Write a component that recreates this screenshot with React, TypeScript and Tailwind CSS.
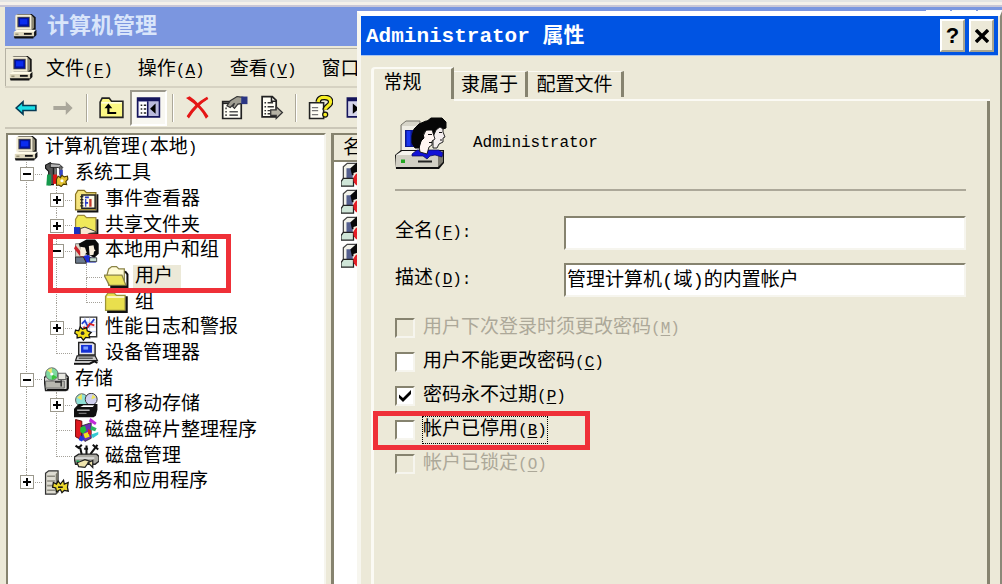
import type { ReactNode } from "react"

type IconProps = { children: ReactNode; className?: string }

function Icon({ children, className = "size-[25px]" }: IconProps) {
  return (
    <svg viewBox="0 0 16 16" className={`shrink-0 ${className}`} aria-hidden="true">
      {children}
    </svg>
  )
}

const ComputerIcon = () => (
  <Icon>
    <path d="M2 1l1-1h9l2.500 2v8L13 11H3z" fill="#111" />
    <path d="M1.500 1l1-.7H11l1 .7v9H1.500z" fill="#f3edd6" />
    <path d="M12 1l1.500 1.500v6.500L12 10z" fill="#8d8872" />
    <path d="M2.800 1.800h7.900v6.700H2.800z" fill="#4c4a44" />
    <path d="M3.500 2.400h6.700v5.600H3.500z" fill="#0012a0" />
    <path d="M4.500 3.300h4.700v3.400H4.500z" fill="#0a2cf0" />
    <path d="M.5 11.500L2.500 10h12l-1 1.500z" fill="#fffbe8" />
    <path d="M.5 11.500h13v3H.5z" fill="#ded7bd" />
    <path d="M13.500 11.500l1.500-1.500v3.500l-1.500 1.500z" fill="#111" />
    <path d="M.5 14.300h13l-.5 1.400H1z" fill="#111" />
    <path d="M7 12.700h5" stroke="#111" strokeWidth="1.200" />
    <path d="M1.500 13h2" stroke="#999377" />
  </Icon>
)

const ToolsIcon = () => (
  <Icon>
    <path d="M1 2l3-1.500 2 2v12H3V6L1 4z" fill="#555" stroke="#111" strokeWidth=".7" />
    <path d="M2 8h2.500v7H1.500z" fill="#159a4c" />
    <path d="M4 1l6 .5 2 2-1 1-2-1H4z" fill="#b8b8b8" stroke="#222" strokeWidth=".6" />
    <path d="M6.500 4h1.500v5H6.500zM10 3h1.500v5H10z" fill="#777" stroke="#222" strokeWidth=".4" />
    <path d="M5.800 8h2.500v6H5.800z" fill="#e01414" />
    <path d="M10 5h2v5h-2z" fill="#3446c8" />
    <path d="M8 11l1-2 1.500 1 1-1.500 1.500 1 2-.5.300 2-1.300 1.500.5 2-2-.3-1.500 1.500-1.500-1-1.500.3z" fill="#e3c331" stroke="#4c3b00" strokeWidth=".7" />
    <circle cx="11.500" cy="12" r="1" fill="#fff" />
  </Icon>
)

const EventIcon = () => (
  <Icon>
    <path d="M1 4l1.500-2.500h4L8 3h6v11H1z" fill="#f5e47e" stroke="#8a7422" strokeWidth=".8" />
    <path d="M15 4v11H2" fill="none" stroke="#111" strokeWidth="1.200" />
    <path d="M5 4.500h8.500v8.500H5z" fill="#fffde9" stroke="#222" strokeWidth=".9" />
    <path d="M4 5.500h2M4 7.500h2M4 9.500h2M4 11.500h2" stroke="#222" strokeWidth=".8" />
    <path d="M7 6h2.500M7 9.500h2" stroke="#2638c8" />
    <path d="M7.500 7v5" stroke="#2638c8" strokeWidth=".8" />
    <path d="M10.500 7v5" stroke="#c43b2d" strokeWidth="1.500" />
  </Icon>
)

const SharedIcon = () => (
  <Icon>
    <path d="M1 4l1.500-2.500h4L8 3h6v10H1z" fill="#f0e95a" stroke="#9c8a3c" strokeWidth=".8" />
    <path d="M15 4v9.500H8" fill="none" stroke="#111" strokeWidth="1.200" />
    <path d="M0 9h4v6H0z" fill="#1a32c0" />
    <path d="M4 10l3-1 6 2.500 1.500 1L10 13l-3 1.500H4z" fill="#f8ead4" stroke="#333" strokeWidth=".6" />
    <path d="M1 15.300h11" stroke="#111" strokeWidth=".9" />
  </Icon>
)

const UsersIcon = () => (
  <Icon>
    <path d="M1 3h6v9H1z" fill="#d9d6c8" stroke="#777" strokeWidth=".6" />
    <path d="M1 4l8 10-2 1L0 6z" fill="#c9252c" />
    <path d="M3 3L8 .3h5.500L15.800 3v6.500L13 12l-2-1-6-2z" fill="#0a0a0a" />
    <path d="M9.500 4.500L12.500 4l.5 2.500.8 1-1 .5-.3 2-2.500.5z" fill="#f8eedd" />
    <path d="M4 5l3 .5 1 3-1.500 2.500H4z" fill="#f8eedd" />
    <path d="M6 11l3-1 2 2h3v3H8z" fill="#1a2bd6" />
    <path d="M1 11.500h5l2 4H1z" fill="#6c7a8c" stroke="#222" strokeWidth=".6" />
    <path d="M10 12h4.500v2.500H10z" fill="#c4ddd0" stroke="#222" strokeWidth=".5" />
  </Icon>
)

const OpenFolderIcon = () => (
  <Icon>
    <path d="M2 6l1-3.500L5 1h3l1.500 1.500H13V13H3z" fill="#fffbd6" stroke="#8a8346" strokeWidth=".8" />
    <path d="M0 6.500h11.500L14 13H3.500z" fill="#ece25c" stroke="#8a8346" strokeWidth=".8" />
    <path d="M13.500 4L15 6v8H4" fill="none" stroke="#111" strokeWidth="1.300" />
  </Icon>
)

const FolderIcon = () => (
  <Icon>
    <path d="M1 4l1.500-2h4L8 3.500h5.500V13H1z" fill="#e9df4d" stroke="#9d9439" strokeWidth=".8" />
    <path d="M2 4.500h11" stroke="#fffde0" />
    <path d="M14.500 4v10H2" fill="none" stroke="#111" strokeWidth="1.400" />
  </Icon>
)

const PerfIcon = () => (
  <Icon>
    <path d="M4 .7h10.500v12.600H4z" fill="#fff" stroke="#333" strokeWidth=".9" />
    <path d="M5 4h9M5 7h9M5 10h9M7 1v11M10 1v11" stroke="#b9c3ef" strokeWidth=".5" />
    <path d="M5 5l2-2 2 4 4-5" fill="none" stroke="#2040d0" strokeWidth="1.100" />
    <path d="M6 7l2 1 2-3 3 1" fill="none" stroke="#d22" strokeWidth="1.100" />
    <path d="M1 9l2 .5L4 7l1.500 1.500L8 7.500l.5 2 2.500 1-1.500 1.500.5 2-2.500-.3L6 15.500l-1.500-2L2 14v-2L.5 11z" fill="#f4e018" stroke="#111" strokeWidth=".8" />
    <circle cx="5.500" cy="11" r="1.200" fill="#333" />
  </Icon>
)

const DeviceIcon = () => (
  <Icon>
    <path d="M3 1h9l1.500 1v7H3z" fill="#e4e4ee" stroke="#222" strokeWidth=".9" />
    <path d="M4.500 2.500h7v5h-7z" fill="#1430d4" />
    <path d="M6 3.500h3v2H6z" fill="#7fa0ff" />
    <path d="M2 9.500h11.500l1.500 3H1z" fill="#c9c9c9" stroke="#222" strokeWidth=".8" />
    <path d="M3 11h9" stroke="#444" strokeWidth=".8" />
    <path d="M0 14.500h10l3-1.500 2 1" fill="none" stroke="#111" strokeWidth="1.300" />
  </Icon>
)

const StorageIcon = () => (
  <Icon>
    <path d="M0 7l2-2h12l1.500 1.500v7L14 15H1z" fill="#d5d5d0" stroke="#222" strokeWidth=".9" />
    <circle cx="5" cy="4.500" r="4" fill="#7ed9a0" stroke="#666" strokeWidth=".6" />
    <path d="M5 4.500L2 2l3-1.300z" fill="#f3e867" />
    <path d="M5 4.500l3.500 2L5 8.300z" fill="#3bc43b" />
    <circle cx="5" cy="4.500" r="1" fill="#fff" />
    <path d="M1 9h12v4.500H1z" fill="#b8b8b0" stroke="#555" strokeWidth=".5" />
    <path d="M9 4h5v4H9z" fill="#e8e8e2" stroke="#555" strokeWidth=".6" />
    <path d="M11 8.500v4M7 9.500h4" stroke="#333" />
    <path d="M15 7v7.500H2" fill="none" stroke="#111" />
  </Icon>
)

const RemovableIcon = () => (
  <Icon>
    <circle cx="5" cy="4.500" r="4" fill="#8fe0d6" stroke="#555" strokeWidth=".6" />
    <circle cx="11" cy="4" r="3.800" fill="#cfd0ee" stroke="#333" strokeWidth=".6" />
    <path d="M5 4.500L2 3l3-2.500zM11 4l3-1-2-2z" fill="#f0e657" />
    <path d="M0 10l3-3h12v3.500l-1 4L12.500 15.500H0z" fill="#101010" />
    <path d="M4 9h8l1-1.200H6z" fill="#fff" />
    <path d="M2 11h8" stroke="#ddd" strokeWidth=".8" />
    <path d="M3 13h5" stroke="#888" strokeWidth=".7" />
  </Icon>
)

const DefragIcon = () => (
  <Icon>
    <path d="M1 1l4 1v12L1 12z" fill="#e0191f" stroke="#600" strokeWidth=".6" />
    <path d="M5 5l6-2v10l-4 2-2-2z" fill="#6c2fb5" stroke="#222" strokeWidth=".5" />
    <path d="M4 6l3-1 1 3-2 2-2-1z" fill="#1fbf3a" />
    <path d="M6 10l3-1 1 3-3 1z" fill="#f0e41e" />
    <path d="M4 11l3 2-2 2-2-1z" fill="#2238dc" />
    <path d="M10.500 0l4 3-1 1.500-4-2.500z" fill="#c22ad8" />
    <path d="M11 5l3.500 1.500-1 2-3-1z" fill="#2cb65e" />
    <path d="M11 10.500l4.500-1.500v1.500L12 13z" fill="#35c9d3" />
    <path d="M9 7l2 1v3L9 10z" fill="#e0191f" />
  </Icon>
)

const DiskIcon = () => (
  <Icon>
    <path d="M1 1l2 1.500 2-2M4 2.500L5 7M8 1v6M6.500 3H9M15 .5l-4.500 6M12 .5l3.500 3" fill="none" stroke="#111" strokeWidth="1.300" />
    <path d="M0 8.500l3-2h11.500L16 8v3l-2.500 2H1z" fill="#aaa9a2" stroke="#222" strokeWidth=".9" />
    <path d="M1 9h12" stroke="#eee" strokeWidth=".8" />
    <path d="M2 12l5-2 3 1-3 4-4-.5zM9 12l3-1.500V15z" fill="#efe4ad" stroke="#222" strokeWidth=".8" />
    <path d="M1.500 11h2" stroke="#16a050" />
  </Icon>
)

const ServicesIcon = () => (
  <Icon>
    <path d="M1 2l2-1.500h6V14l-1.500 1.500H1z" fill="#dedcd2" stroke="#333" strokeWidth=".8" />
    <path d="M7.500 2.500L9 1v13l-1.500 1.500z" fill="#77756a" />
    <path d="M2 4h5M2 7h5M2 10h5M2 13h5" stroke="#8d8b80" />
    <path d="M6 8l2 1 1-2 1.500 2 2-2.500.5 2.500 2.500-1-.5 3 .5 2.500-2.500-.5-1.500 1.500-1-2L8 14l-.5-2.500L5.500 11z" fill="#ecd92e" stroke="#111" strokeWidth=".8" />
    <path d="M9 11h3" stroke="#111" />
  </Icon>
)

const AccountIcon = () => (
  <Icon>
    <path d="M1.500 3L4 .8h7V13H1.500z" fill="#f2f2ea" stroke="#444" strokeWidth=".8" />
    <path d="M3.500 4h4v6.500h-4z" fill="#55608f" />
    <path d="M6 4l4-3.500h6v8H7z" fill="#080808" />
    <path d="M8 7l3-1 .5 4L8 11z" fill="#f5eadc" />
    <path d="M0 12.500l1.500-2H8v5H0z" fill="#cfe6d8" stroke="#222" strokeWidth=".8" />
    <circle cx="12.500" cy="11.200" r="4.600" fill="#e51c24" />
    <path d="M10.500 9.200l4 4M14.500 9.200l-4 4" stroke="#fff" strokeWidth="1.300" />
  </Icon>
)

const AdministratorIcon = () => (
  <svg viewBox="0 0 52 54" className="h-[54px] w-[52px] shrink-0" aria-hidden="true">
    <path d="M6 8l5-4h14v31H6z" fill="#d7d5c9" stroke="#77756b" />
    <path d="M7 9h19v25H7z" fill="#efede4" />
    <path d="M10 13h12v17H10z" fill="#0b1790" />
    <path d="M11.500 14h4v15h-4z" fill="#1b37ee" />
    <path d="M0 38l6-5h43v13l-5 6H1z" fill="#111" />
    <path d="M1 38l6-4h41l-5 4z" fill="#f5f4ee" />
    <path d="M1 38h42v12H1z" fill="#d2d0c5" />
    <path d="M43 38l5-4v11l-5 5z" fill="#7c7a70" />
    <path d="M6 42.500h4v3.500H6z" fill="#22a722" />
    <path d="M23 44.500h14" stroke="#222" strokeWidth="2" />
    <path d="M17 37l5-4h22l4 3-1 4-7-2-5 1-3 3-4-3H17z" fill="#1212d8" stroke="#0a0a50" strokeWidth=".7" />
    <path d="M31 5l5-4h11l4 4v6l-3 1-3-2-4 3v7l-4 2z" fill="#060606" stroke="#060606" strokeLinejoin="round" />
    <path d="M41 13l4-3 3 2v3l2 5-2 1v4l-4 2-2 4h-4l0-11z" fill="#f4eeee" stroke="#111" strokeWidth=".9" />
    <path d="M31 13l6-1 1 4 2 6-3 2v4l-3 2-2 7-7-2-1-6 2-5z" fill="#fff5f2" stroke="#111" strokeWidth=".9" />
    <path d="M17 19l2-7 5-5 7-3h8l4 3-1 4-5 2h-6l-3 4 1 4-3 3-2 7h-4l-3-5z" fill="#060606" stroke="#060606" strokeLinejoin="round" />
    <path d="M33 17.500h4M44 15.500h3M34 25.500h3M45 23h2" stroke="#111" />
  </svg>
)

type Node = { text: string; latin?: string; icon: ReactNode; cells: string[]; selected?: boolean }

// one cell per level: "|" passes through, "T" branches, "L" ends; + and - add an expander
const tree: Node[] = [
  { text: "计算机管理", latin: "本地", icon: <ComputerIcon />, cells: [] },
  { text: "系统工具", icon: <ToolsIcon />, cells: ["T-"] },
  { text: "事件查看器", icon: <EventIcon />, cells: ["|", "T+"] },
  { text: "共享文件夹", icon: <SharedIcon />, cells: ["|", "T+"] },
  { text: "本地用户和组", icon: <UsersIcon />, cells: ["|", "T-"] },
  { text: "用户", icon: <OpenFolderIcon />, cells: ["|", "|", "T"], selected: true },
  { text: "组", icon: <FolderIcon />, cells: ["|", "|", "L"] },
  { text: "性能日志和警报", icon: <PerfIcon />, cells: ["|", "T+"] },
  { text: "设备管理器", icon: <DeviceIcon />, cells: ["|", "L"] },
  { text: "存储", icon: <StorageIcon />, cells: ["T-"] },
  { text: "可移动存储", icon: <RemovableIcon />, cells: ["|", "T+"] },
  { text: "磁盘碎片整理程序", icon: <DefragIcon />, cells: ["|", "T"] },
  { text: "磁盘管理", icon: <DiskIcon />, cells: ["|", "L"] },
  { text: "服务和应用程序", icon: <ServicesIcon />, cells: ["L+"] },
]

function Cell({ kind }: { kind: string }) {
  const branch = kind[0] !== "|"
  return (
    <span className="relative flex w-[30px] shrink-0 justify-end self-stretch">
      <span className="flex w-4 flex-col">
        <span className={`flex-1 border-l border-dotted border-[#a5a29a] ${branch ? "border-b" : ""}`} />
        <span className={`flex-1 border-dotted border-[#a5a29a] ${kind[0] === "L" ? "" : "border-l"}`} />
      </span>
      {kind[1] && (
        <button
          type="button"
          aria-label={kind[1] === "+" ? "展开" : "折叠"}
          className="absolute inset-0 m-auto flex size-[14px] items-center justify-center border border-[#9b988c] bg-white"
        >
          <svg viewBox="0 0 8 8" className="size-2" aria-hidden="true">
            <path d={kind[1] === "+" ? "M0 4h8M4 0v8" : "M0 4h8"} stroke="#000" strokeWidth="2" />
          </svg>
        </button>
      )}
    </span>
  )
}

function Caption({ text, accel, colon }: { text: string; accel: string; colon?: boolean }) {
  return (
    <>
      {text}
      <span className="text-base">
        (<span className="underline underline-offset-2">{accel}</span>){colon && ":"}
      </span>
    </>
  )
}

function ToolButton({ label, pressed, children }: { label: string; pressed?: boolean; children: ReactNode }) {
  return (
    <button
      type="button"
      aria-label={label}
      className={`flex h-9 w-[37px] shrink-0 items-center justify-center ${
        pressed ? "border-2 border-t-[#9b988c] border-r-white border-b-white border-l-[#9b988c] bg-[#f8f7f1]" : ""
      }`}
    >
      {children}
    </button>
  )
}

const Separator = () => (
  <span className="flex h-7 w-3 shrink-0 justify-center">
    <span className="w-[2px] border-r border-l border-r-white border-l-[#aca899]" />
  </span>
)

function Toolbar() {
  return (
    <div className="flex h-[43px] items-center overflow-hidden border-t-2 border-b-2 border-t-[#d6d2c2] border-b-[#cbc7b8] pl-[2px]">
      <ToolButton label="后退">
        <Icon className="size-[22px]">
          <path d="M.8 8l5-4.500v2.700h9.400v3.600H5.800v2.700z" fill="#18e0e8" stroke="#063a55" strokeWidth="1.200" />
        </Icon>
      </ToolButton>
      <ToolButton label="前进">
        <Icon className="size-[22px]">
          <path d="M15 8l-5-5v3.500H1v3h9V13z" fill="#aaa79b" />
        </Icon>
      </ToolButton>
      <Separator />
      <ToolButton label="上一级">
        <Icon>
          <path d="M.7 4.500L2 2h4.500L8 4h7.300v10.300H.7z" fill="#fbf784" stroke="#222" />
          <path d="M1.500 5h13" stroke="#fffde0" />
          <path d="M6 7v4.500h5" fill="none" stroke="#000" strokeWidth="1.400" />
          <path d="M3.500 8.500L6 5.500l2.500 3z" />
        </Icon>
      </ToolButton>
      <ToolButton label="显示/隐藏控制台树" pressed>
        <Icon>
          <path d="M1 2h14v12H1z" fill="#b9b9dc" stroke="#15155c" />
          <path d="M1 2h14v2H1z" fill="#15155c" />
          <path d="M2 4.500h5V13H2z" fill="#fff" />
          <path d="M3 6.500h1M5 6.500h1.500M3 9h1M5 9h1.500M3 11.500h1M5 11.500h1.500" stroke="#222" />
          <path d="M7.500 4v10" stroke="#15155c" />
          <path d="M12.500 5.500v6.500L9 8.800z" />
        </Icon>
      </ToolButton>
      <Separator />
      <ToolButton label="删除">
        <Icon className="size-[23px]">
          <path d="M1 1.500C5 4 11 9 14 15l1-1C12 9 6 3 2.500 .8z" fill="#e51616" stroke="#e51616" />
          <path d="M14.500 1C9 4 4 9 1 14l1 1C5 10 10 5 15 2z" fill="#e51616" stroke="#e51616" strokeWidth=".8" />
        </Icon>
      </ToolButton>
      <ToolButton label="属性">
        <Icon className="size-[27px]">
          <path d="M1 4.500h11v10H1z" fill="#fffef5" stroke="#222" />
          <path d="M1 5.500h11" stroke="#222" />
          <path d="M2.500 8.500h1M2.500 10.500h1M2.500 12.500h1M5 10.500h5M5 12.500h5" stroke="#555" />
          <path d="M3.500 7l2-3 4-2.500L13 2v3.500L10 6 8 8.500 7 7.500l1-2L5.500 8z" fill="#a09e92" stroke="#333" strokeWidth=".7" />
          <path d="M12 1.500h3.700V6H12z" fill="#2b3684" />
        </Icon>
      </ToolButton>
      <ToolButton label="导出列表">
        <Icon>
          <path d="M2 1h6.500L11 3.500V14H2z" fill="#fffef5" stroke="#222" strokeWidth="1.100" />
          <path d="M8 1v3h3" fill="none" stroke="#222" />
          <path d="M3.500 5h1M3.500 7.500h1M3.500 10h1M3.500 12h1M5.500 5H9M5.500 7.500h4M5.500 10h2M5.500 12h2" stroke="#333" strokeWidth=".9" />
          <path d="M7.500 9.500H11v-2l4 3.700-4 3.800v-2H7.500z" fill="#b5b2a4" stroke="#333" strokeWidth=".8" />
        </Icon>
      </ToolButton>
      <Separator />
      <ToolButton label="帮助">
        <Icon>
          <path d="M1 5h9v10H1z" fill="#fffef5" stroke="#222" />
          <path d="M2.500 8h4M2.500 10h4M2.500 12.500h4" stroke="#777" strokeWidth=".8" />
          <path d="M6.500 4.500C7 1.500 9 1.500 10.500 1.500c3 0 4 1.500 4 3 0 2.500-3.500 2.500-3.500 5" fill="none" stroke="#111" strokeWidth="3.600" />
          <path d="M6.500 4.500C7 1.500 9 1.500 10.500 1.500c3 0 4 1.500 4 3 0 2.500-3.500 2.500-3.500 5" fill="none" stroke="#f7ee22" strokeWidth="2" />
          <circle cx="11" cy="12.500" r="1.600" fill="#f7ee22" stroke="#111" strokeWidth=".8" />
        </Icon>
      </ToolButton>
      <ToolButton label="显示/隐藏操作窗格">
        <Icon>
          <path d="M1.500 2h13v12h-13z" fill="#d5d5ea" stroke="#15155c" />
          <path d="M1.500 2h13v2h-13z" fill="#15155c" />
          <path d="M5 5.500V12l4-3.200z" />
        </Icon>
      </ToolButton>
    </div>
  )
}

function ManagementWindow() {
  return (
    <main className="flex flex-1 flex-col border-l-[5px] border-[#ece9d8] bg-[#ece9d8]">
      <header className="flex h-[39px] items-center justify-between bg-[#7b96e0] pl-2">
        <div className="flex items-center gap-[9px]">
          <ComputerIcon />
          <h1 className="pt-[3px] text-[22px] leading-7 font-bold text-[#d9e5fa]">计算机管理</h1>
        </div>
        <div className="flex gap-[2px]">
          {["最小化", "最大化", "关闭"].map((label) => (
            <button key={label} type="button" aria-label={label} className="h-[34px] w-6 bg-[#fdfcf8]" />
          ))}
        </div>
      </header>
      <nav className="mt-[2px] flex h-[38px] items-center border-t border-l border-[#b5b2a4] pt-[2px] pl-[3px]">
        <ComputerIcon />
        <div className="ml-3 flex gap-[25px] pt-[2px]">
          {[["文件", "F"], ["操作", "A"], ["查看", "V"]].map(([text, accel]) => (
            <button key={accel} type="button" className="whitespace-nowrap">
              <Caption text={text} accel={accel} />
            </button>
          ))}
          <button type="button">窗口</button>
        </div>
      </nav>
      <Toolbar />
      <div className="mt-1 flex flex-1 gap-[5px] pl-px">
        <section className="w-[320px] shrink-0 border-2 border-t-[#86836f] border-r-[#f6f5ee] border-b-0 border-l-[#86836f] bg-white">
          <ul className="grid h-[360px] auto-rows-fr pt-px pl-1">
            {tree.map((node) => (
              <li key={node.text} className="flex min-h-0 items-center">
                {node.cells.map((kind, i) => (
                  <Cell key={i} kind={kind} />
                ))}
                <span className="ml-[2px] flex items-center gap-1">
                  {node.icon}
                  <span className={`px-[2px] leading-6 whitespace-nowrap ${node.selected ? "bg-[#ece9d8] pr-2" : ""}`}>
                    {node.text}
                    {node.latin && (
                      <>
                        <span className="text-base">(</span>
                        {node.latin}
                        <span className="text-base">)</span>
                      </>
                    )}
                  </span>
                </span>
              </li>
            ))}
          </ul>
        </section>
        <section className="flex-1 border-t-2 border-l-[3px] border-[#86836f] bg-white">
          <h2 className="h-[27px] border-b-2 border-[#86836f] bg-[#ece9d8] pl-[9px] leading-7">名</h2>
          <ul className="flex flex-col gap-[2px] pl-[7px]">
            {[0, 1, 2, 3].map((i) => (
              <li key={i}>
                <AccountIcon />
              </li>
            ))}
          </ul>
        </section>
      </div>
    </main>
  )
}

const options = [
  { id: "change", text: "用户下次登录时须更改密码", accel: "M", disabled: true },
  { id: "fixed", text: "用户不能更改密码", accel: "C" },
  { id: "never", text: "密码永不过期", accel: "P", checked: true },
  { id: "off", text: "帐户已停用", accel: "B", focused: true },
  { id: "locked", text: "帐户已锁定", accel: "O", disabled: true },
]

const fields = [
  { id: "fullname", text: "全名", accel: "F", value: "" },
  { id: "description", text: "描述", accel: "D", value: "管理计算机(域)的内置帐户" },
]

function PropertiesDialog() {
  return (
    <div
      role="dialog"
      aria-labelledby="dialog-title"
      className="absolute top-[11px] right-0 bottom-0 left-[357px] flex flex-col border-t-[5px] border-r-2 border-l-4 border-t-white border-r-[#8b8878] border-l-[#f7f6ef] bg-[#ece9d8]"
    >
      <header className="mr-[2px] flex h-10 items-center justify-between border-b border-[#a9c4f0] bg-[#0054e3] pr-1 pl-[5px]">
        <h2 id="dialog-title" className="pt-[3px] text-[21px] leading-7 font-bold text-white">
          Administrator 属性
        </h2>
        <div className="flex gap-1">
          <button
            type="button"
            aria-label="帮助"
            className="h-[33px] w-[25px] border-2 border-t-white border-r-[#a8a48f] border-b-[#a8a48f] border-l-white bg-[#ece9d8] font-['Liberation_Sans',sans-serif] text-[22px] leading-7 font-bold"
          >
            ?
          </button>
          <button
            type="button"
            aria-label="关闭"
            className="flex h-[33px] w-[25px] items-center justify-center border-2 border-t-white border-r-[#a8a48f] border-b-[#a8a48f] border-l-white bg-[#ece9d8]"
          >
            <svg viewBox="0 0 14 14" className="size-[14px]" aria-hidden="true">
              <path d="M1 1l12 12M13 1L1 13" stroke="#000" strokeWidth="3.400" />
            </svg>
          </button>
        </div>
      </header>

      <div role="tablist" className="mt-[11px] ml-[10px] flex items-end">
        <button
          type="button"
          role="tab"
          aria-selected="true"
          className="h-8 w-[83px] rounded-tl-sm border-t-2 border-r-[3px] border-l-[3px] border-t-[#fbfaf4] border-r-[#86836f] border-l-[#fbfaf4] pr-5 pb-px leading-7"
        >
          常规
        </button>
        <button type="button" role="tab" aria-selected="false" className="mb-[2px] h-[26px] w-[74px] border-t border-r-[3px] border-t-[#fbfaf4] border-r-[#86836f] leading-7">
          隶属于
        </button>
        <button type="button" role="tab" aria-selected="false" className="mb-[2px] h-[26px] w-24 border-t border-r-[3px] border-t-[#fbfaf4] border-r-[#86836f] leading-7">
          配置文件
        </button>
      </div>

      <div className="mr-[10px] ml-[10px] flex flex-1">
        <div className="w-[3px] bg-[#fbfaf4]" />
        <div className="flex flex-1 flex-col">
          <div className="ml-20 h-[2px] bg-[#fbfaf4]" />
          <div className="flex-1 border-r-[3px] border-[#86836f] pt-4 pr-[21px] pl-[21px]">
            <div className="flex h-[74px] gap-[26px] border-b-2 border-[#aca899]">
              <AdministratorIcon />
              <p className="mt-[14px] text-base leading-6">Administrator</p>
            </div>
            <div className="mt-[25px] flex flex-col gap-[13px]">
              {fields.map((field) => (
                <div key={field.id} className="flex items-start">
                  <label htmlFor={field.id} className="w-[169px] shrink-0 leading-8">
                    <Caption text={field.text} accel={field.accel} colon />
                  </label>
                  <input
                    id={field.id}
                    type="text"
                    defaultValue={field.value}
                    className="h-[34px] min-w-0 flex-1 border-2 border-t-[#86836f] border-r-[#f6f5ee] border-b-[#f6f5ee] border-l-[#86836f] bg-white pb-[5px] pl-px outline-none"
                  />
                </div>
              ))}
            </div>
            <div className="mt-[14px] grid h-[170px] auto-rows-fr">
              {options.map((option) => (
                <div key={option.id} className="flex items-center gap-[8px]">
                  <span className="relative flex size-5">
                    <input
                      id={option.id}
                      type="checkbox"
                      defaultChecked={option.checked}
                      disabled={option.disabled}
                      className="peer size-5 appearance-none border-2 border-t-[#86836f] border-r-[#f6f5ee] border-b-[#f6f5ee] border-l-[#86836f] bg-white disabled:bg-[#ece9d8]"
                    />
                    <svg viewBox="0 0 12 12" className="pointer-events-none absolute inset-0 m-auto hidden size-3 peer-checked:block" aria-hidden="true">
                      <path d="M0 4.500l4 3.500L12 0v4L4 12 0 8z" />
                    </svg>
                  </span>
                  <label
                    htmlFor={option.id}
                    className={`pt-px leading-6 whitespace-nowrap ${option.disabled ? "text-[#aca899]" : ""} ${
                      option.focused ? "outline-1 outline-black outline-dotted" : ""
                    }`}
                  >
                    <Caption text={option.text} accel={option.accel} />
                  </label>
                </div>
              ))}
            </div>
          </div>
        </div>
      </div>
    </div>
  )
}

export default function App() {
  return (
    <div className="relative flex min-h-screen flex-col overflow-hidden bg-[#ece9d8] font-['Liberation_Mono','Noto_Sans_CJK_SC',monospace] text-[19px] leading-7 text-black">
      <div className="h-[7px] border-t-2 border-b-2 border-t-[#e3e3e3] border-b-[#c9c6d6] bg-[#f5f0ea]" />
      <ManagementWindow />
      <PropertiesDialog />
      <div className="pointer-events-none absolute top-[234px] left-[48px] h-[59px] w-[183px] border-[5px] border-[#ef3038]" />
      <div className="pointer-events-none absolute top-[411px] left-[373px] h-[39px] w-[217px] border-[5px] border-[#ef3038]" />
    </div>
  )
}
